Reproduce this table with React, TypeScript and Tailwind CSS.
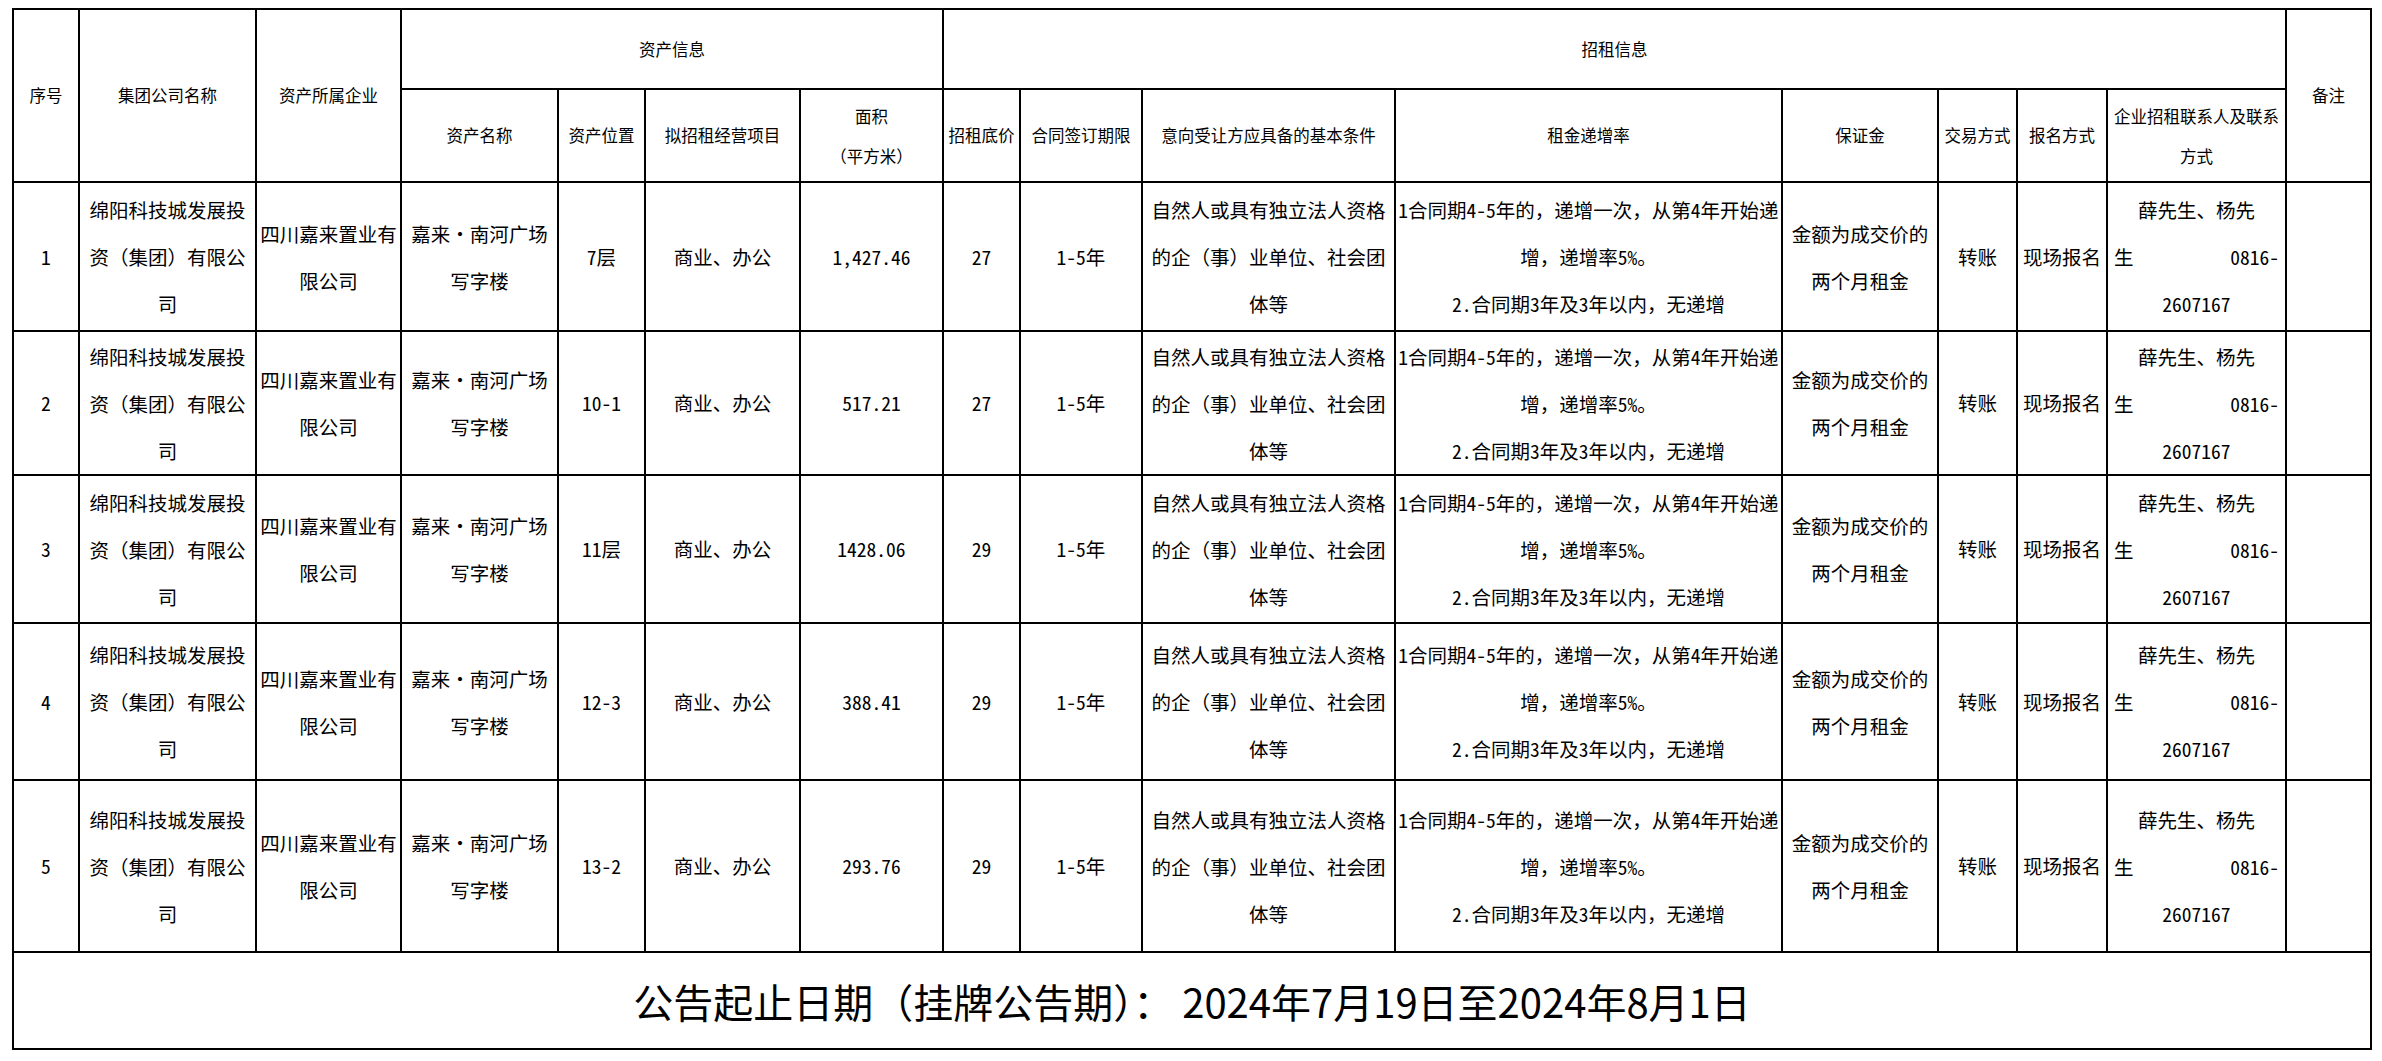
import React from 'react';

const body = "font-['Noto_Sans_Mono_CJK_SC','Noto_Sans_CJK_SC',sans-serif]";
const cell = 'border-2 border-black p-0 text-center align-middle';
const th = `${cell} font-normal text-[16.5px]`;
const td = `${cell} text-[19.5px]`;

const rows = [
  { n: '1', pos: '7层', area: '1,427.46', price: '27', h: 'h-[149px]' },
  { n: '2', pos: '10-1', area: '517.21', price: '27', h: 'h-[144px]' },
  { n: '3', pos: '11层', area: '1428.06', price: '29', h: 'h-[148px]' },
  { n: '4', pos: '12-3', area: '388.41', price: '29', h: 'h-[157px]' },
  { n: '5', pos: '13-2', area: '293.76', price: '29', h: 'h-[172px]' },
];

function Lines({ lines }: { lines: string[] }) {
  return (
    <>
      {lines.map((l, i) => (
        <div key={i} className="leading-[47px] whitespace-nowrap">{l}</div>
      ))}
    </>
  );
}

function HeadLines({ lines }: { lines: string[] }) {
  return (
    <>
      {lines.map((l, i) => (
        <div key={i} className="leading-[40px] whitespace-nowrap">{l}</div>
      ))}
    </>
  );
}

export default function App() {
  return (
    <div className={`min-h-screen bg-white text-black pt-[8px] pl-[12px] ${body}`}>
      <table className="table-fixed border-collapse w-[2358px]">
        <colgroup>
          <col className="w-[66px]" />
          <col className="w-[177px]" />
          <col className="w-[145px]" />
          <col className="w-[157px]" />
          <col className="w-[87px]" />
          <col className="w-[155px]" />
          <col className="w-[143px]" />
          <col className="w-[77px]" />
          <col className="w-[122px]" />
          <col className="w-[253px]" />
          <col className="w-[387px]" />
          <col className="w-[156px]" />
          <col className="w-[79px]" />
          <col className="w-[90px]" />
          <col className="w-[179px]" />
          <col className="w-[85px]" />
        </colgroup>
        <thead>
          <tr className="h-[80px]">
            <th rowSpan={2} className={th}>序号</th>
            <th rowSpan={2} className={th}>集团公司名称</th>
            <th rowSpan={2} className={th}>资产所属企业</th>
            <th colSpan={4} className={th}>资产信息</th>
            <th colSpan={8} className={th}>招租信息</th>
            <th rowSpan={2} className={th}>备注</th>
          </tr>
          <tr className="h-[93px]">
            <th className={th}>资产名称</th>
            <th className={th}>资产位置</th>
            <th className={th}>拟招租经营项目</th>
            <th className={th}><HeadLines lines={['面积', '（平方米）']} /></th>
            <th className={th}>招租底价</th>
            <th className={th}>合同签订期限</th>
            <th className={th}>意向受让方应具备的基本条件</th>
            <th className={th}>租金递增率</th>
            <th className={th}>保证金</th>
            <th className={th}>交易方式</th>
            <th className={th}>报名方式</th>
            <th className={th}><HeadLines lines={['企业招租联系人及联系', '方式']} /></th>
          </tr>
        </thead>
        <tbody>
          {rows.map((r) => (
            <tr key={r.n} className={r.h}>
              <td className={td}>{r.n}</td>
              <td className={td}><Lines lines={['绵阳科技城发展投', '资（集团）有限公', '司']} /></td>
              <td className={td}><Lines lines={['四川嘉来置业有', '限公司']} /></td>
              <td className={td}><Lines lines={['嘉来·南河广场', '写字楼']} /></td>
              <td className={td}>{r.pos}</td>
              <td className={td}>商业、办公</td>
              <td className={td}>{r.area}</td>
              <td className={td}>{r.price}</td>
              <td className={td}>1-5年</td>
              <td className={td}><Lines lines={['自然人或具有独立法人资格', '的企（事）业单位、社会团', '体等']} /></td>
              <td className={td}>
                <Lines lines={['1合同期4-5年的，递增一次，从第4年开始递', '增，递增率5%。', '2.合同期3年及3年以内，无递增']} />
              </td>
              <td className={td}><Lines lines={['金额为成交价的', '两个月租金']} /></td>
              <td className={td}>转账</td>
              <td className={td}>现场报名</td>
              <td className={td}>
                <div className="leading-[47px] whitespace-nowrap">薛先生、杨先</div>
                <div className="leading-[47px] flex justify-between px-[6px]">
                  <span>生</span>
                  <span>0816-</span>
                </div>
                <div className="leading-[47px] whitespace-nowrap">2607167</div>
              </td>
              <td className={td}></td>
            </tr>
          ))}
          <tr className="h-[97px]">
            <td colSpan={16} className={`${cell} text-[40px] font-['Noto_Sans_CJK_SC',sans-serif]`}>
              公告起止日期（挂牌公告期）：&nbsp;2024年7月19日至2024年8月1日
            </td>
          </tr>
        </tbody>
      </table>
    </div>
  );
}
